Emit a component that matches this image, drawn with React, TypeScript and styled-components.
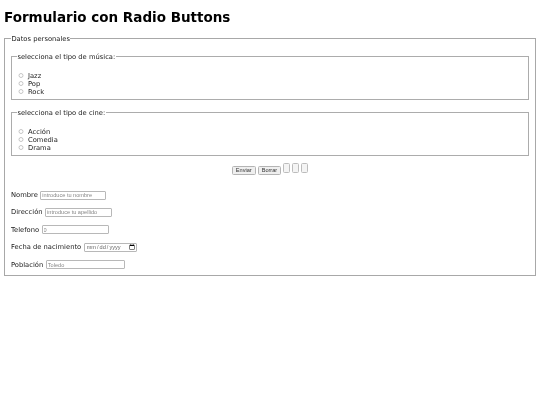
import React from "react";
import styled, { createGlobalStyle } from "styled-components";

const GlobalStyle = createGlobalStyle`
  html {
    background: #fff;
  }
  body {
    margin: 0;
    padding: 0 4px;
    font: 6.75px/8px "DejaVu Sans", sans-serif;
    color: #222;
  }
`;

const Page = styled.div`
  filter: grayscale(1) blur(0.25px);
  padding-top: 0.1px;
`;

const Title = styled.h1`
  font-size: 13.5px;
  line-height: 16px;
  font-weight: bold;
  color: #000;
  margin: 9px 0 8px;
`;

const OuterSet = styled.fieldset`
  margin: 0;
  padding: 8px 6px 6px;
  border: 1px solid #a8a8a8;
`;

const InnerSet = styled.fieldset`
  margin: 0 0 7px;
  padding: 0 5px 3.5px;
  border: 1px solid #acacac;
`;

const Legend = styled.legend`
  padding: 2px 0.4px 0;
`;

const Options = styled.div`
  margin-top: 10.5px;
`;

const Option = styled.label`
  display: flex;
  align-items: center;
  gap: 4.3px;
  height: 8px;
`;

const Radio = styled.input.attrs({ type: "radio" })`
  width: 5.5px;
  height: 5.5px;
  margin: 0 0 0 1.2px;
  opacity: 0.42;
`;

const Buttons = styled.div`
  display: flex;
  justify-content: center;
  align-items: flex-start;
  gap: 2px;
  margin: 1px 0 15.5px;
`;

const ActionButton = styled.button`
  margin: 2.5px 0 0;
  padding: 0 3px;
  height: 9.5px;
  border: 1px solid #b4b4b4;
  border-radius: 1.5px;
  background: #efefef;
  color: #333;
  font: 5.6px "Liberation Sans", Arial, sans-serif;
`;

const EmptyButton = styled.button`
  width: 7px;
  height: 9.5px;
  margin: 0;
  padding: 0;
  border: 1px solid #bcbcbc;
  border-radius: 1.5px;
  background: #f4f4f4;
`;

const Rows = styled.div`
  display: flex;
  flex-direction: column;
  gap: 8.4px;
`;

const Row = styled.label`
  display: flex;
  align-items: center;
  gap: 2.5px;
  height: 9px;
`;

const Field = styled.input<{ $width: number }>`
  width: ${(p) => p.$width}px;
  height: 9px;
  margin: 0;
  padding: 0 1px;
  box-sizing: border-box;
  border: 1px solid #b8b8b8;
  border-radius: 1px;
  background: #fff;
  color: #666;
  font: 5.6px "Liberation Sans", Arial, sans-serif;
  &::placeholder {
    color: #888;
  }
  &::-webkit-calendar-picker-indicator {
    width: 6px;
    height: 6px;
    margin: 0;
    padding: 0;
  }
  &::-webkit-datetime-edit {
    padding: 0;
  }
`;

const music = ["Jazz", "Pop", "Rock"];
const cinema = ["Acción", "Comedia", "Drama"];

const App = () => {
  return (
    <Page>
      <GlobalStyle />
      <Title>Formulario con Radio Buttons</Title>
      <form>
        <OuterSet>
          <Legend>Datos personales</Legend>
          <InnerSet>
            <Legend>selecciona el tipo de música:</Legend>
            <Options>
              {music.map((m) => (
                <Option key={m}>
                  <Radio name="musica" />
                  {m}
                </Option>
              ))}
            </Options>
          </InnerSet>
          <InnerSet>
            <Legend>selecciona el tipo de cine:</Legend>
            <Options>
              {cinema.map((c) => (
                <Option key={c}>
                  <Radio name="cine" />
                  {c}
                </Option>
              ))}
            </Options>
          </InnerSet>
          <Buttons>
            <ActionButton type="submit">Enviar</ActionButton>
            <ActionButton type="reset">Borrar</ActionButton>
            <EmptyButton type="button" />
            <EmptyButton type="button" />
            <EmptyButton type="button" />
          </Buttons>
          <Rows>
            <Row>
              Nombre
              <Field $width={66} placeholder="introduce tu nombre" />
            </Row>
            <Row>
              Dirección
              <Field $width={67} placeholder="introduce tu apellido" />
            </Row>
            <Row>
              Telefono
              <Field $width={67} type="number" placeholder="0" />
            </Row>
            <Row>
              Fecha de nacimiento
              <Field $width={53} type="date" />
            </Row>
            <Row>
              Población
              <Field $width={79} placeholder="Toledo" />
            </Row>
          </Rows>
        </OuterSet>
      </form>
    </Page>
  );
};

export default App;
